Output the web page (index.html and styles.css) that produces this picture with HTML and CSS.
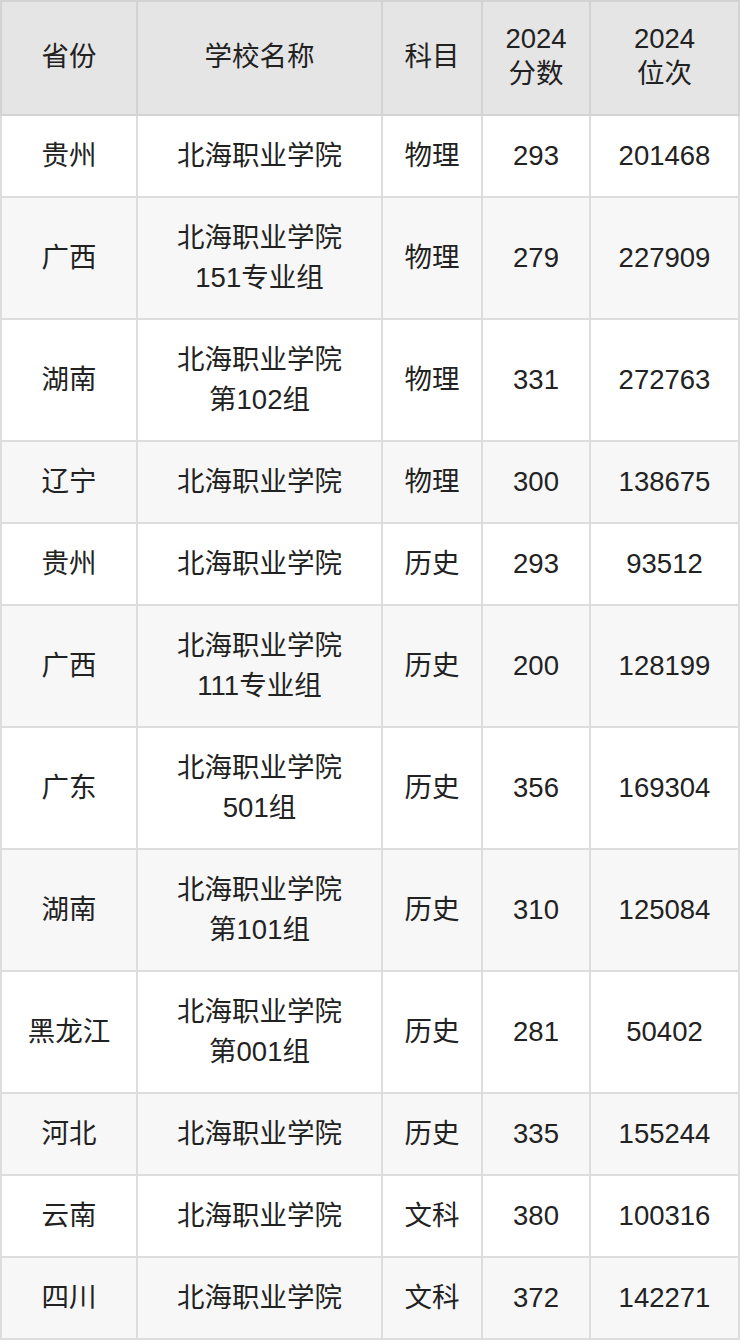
FILE: index.html
```html
<!DOCTYPE html>
<html lang="zh">
<head>
<meta charset="utf-8">
<link rel="stylesheet" href="styles.css">
</head>
<body>
<table class="score-table">
  <colgroup>
    <col class="c1"><col class="c2"><col class="c3"><col class="c4"><col class="c5">
  </colgroup>
  <thead>
    <tr><th>省份</th><th>学校名称</th><th>科目</th><th>2024<br>分数</th><th>2024<br>位次</th></tr>
  </thead>
  <tbody>
    <tr><td>贵州</td><td>北海职业学院</td><td>物理</td><td>293</td><td>201468</td></tr>
    <tr><td>广西</td><td>北海职业学院<br>151专业组</td><td>物理</td><td>279</td><td>227909</td></tr>
    <tr><td>湖南</td><td>北海职业学院<br>第102组</td><td>物理</td><td>331</td><td>272763</td></tr>
    <tr><td>辽宁</td><td>北海职业学院</td><td>物理</td><td>300</td><td>138675</td></tr>
    <tr><td>贵州</td><td>北海职业学院</td><td>历史</td><td>293</td><td>93512</td></tr>
    <tr><td>广西</td><td>北海职业学院<br>111专业组</td><td>历史</td><td>200</td><td>128199</td></tr>
    <tr><td>广东</td><td>北海职业学院<br>501组</td><td>历史</td><td>356</td><td>169304</td></tr>
    <tr><td>湖南</td><td>北海职业学院<br>第101组</td><td>历史</td><td>310</td><td>125084</td></tr>
    <tr><td>黑龙江</td><td>北海职业学院<br>第001组</td><td>历史</td><td>281</td><td>50402</td></tr>
    <tr><td>河北</td><td>北海职业学院</td><td>历史</td><td>335</td><td>155244</td></tr>
    <tr><td>云南</td><td>北海职业学院</td><td>文科</td><td>380</td><td>100316</td></tr>
    <tr><td>四川</td><td>北海职业学院</td><td>文科</td><td>372</td><td>142271</td></tr>
  </tbody>
</table>
</body>
</html>
```
FILE: styles.css
```css
html, body {
  margin: 0;
  padding: 0;
  background: #ffffff;
}
.score-table {
  width: 740px;
  border-collapse: collapse;
  table-layout: fixed;
  font-family: "Liberation Sans", "Noto Sans CJK SC", sans-serif;
  font-size: 27.5px;
  color: #222222;
}
.c1 { width: 136px; }
.c2 { width: 245px; }
.c3 { width: 100px; }
.c4 { width: 108px; }
.c5 { width: 149px; }
.score-table th,
.score-table td {
  border: 2px solid #dddddd;
  text-align: center;
  vertical-align: middle;
  padding: 0 4px;
}
.score-table th {
  background: #e5e5e5;
  border-color: #d3d3d3;
  font-weight: normal;
  line-height: 35px;
  height: 108px;
  padding-bottom: 4px;
}
.score-table td {
  line-height: 40px;
  padding-top: 20px;
  padding-bottom: 20px;
}
.score-table tbody tr:nth-child(even) td {
  background: #f7f7f7;
}
```
